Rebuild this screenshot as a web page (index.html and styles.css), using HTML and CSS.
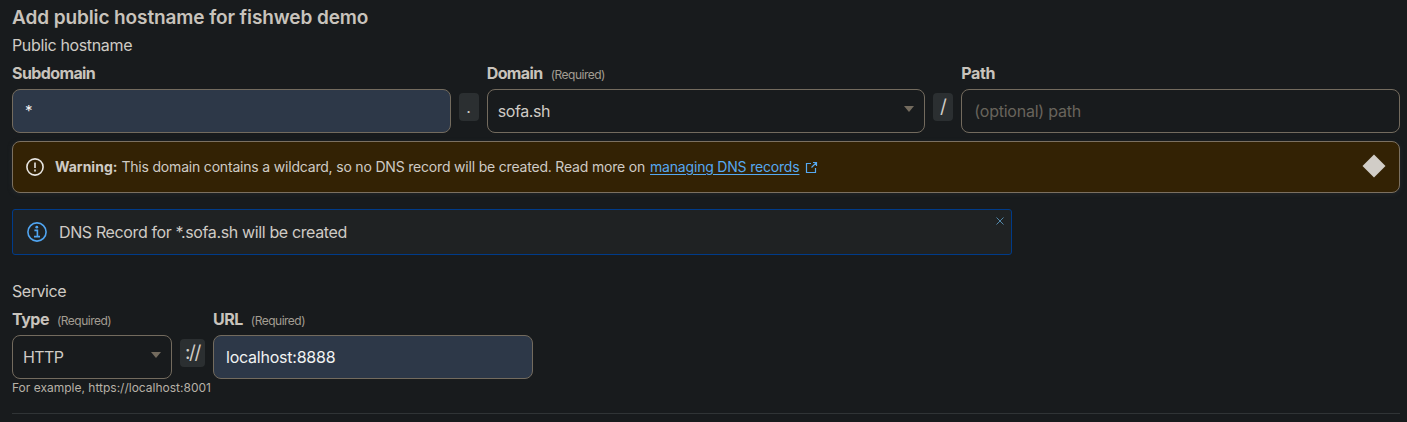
FILE: index.html
```html
<!DOCTYPE html>
<html lang="en">
<head>
<meta charset="utf-8">
<title>Add public hostname</title>
<link rel="stylesheet" href="styles.css">
</head>
<body>
<main class="page">
  <h1 class="title"><span>Add public hostname for fishweb demo</span></h1>
  <p class="section"><span>Public hostname</span></p>
  <div class="row">
    <div class="field">
      <label class="label"><b class="name subdomain">Subdomain</b></label>
      <div class="control filled"><span class="star">*</span></div>
    </div>
    <span class="sep">.</span>
    <div class="field">
      <label class="label"><b class="name domain">Domain</b><small class="required">(Required)</small></label>
      <div class="control select"><span class="sofa">sofa.sh</span><svg class="caret" viewBox="0 0 10 6"><path d="M0 0h10L5 6z"/></svg></div>
    </div>
    <span class="sep slash">/</span>
    <div class="field">
      <label class="label"><b class="name path">Path</b></label>
      <div class="control"><span class="placeholder">(optional) path</span></div>
    </div>
  </div>
  <div class="warning">
    <svg class="warn-icon" viewBox="0 0 18 18"><circle cx="9" cy="9" r="8.1"/><path d="M9 4.6v5.4M9 11.6v1.8"/></svg>
    <p class="warn-text"><b class="warn-name">Warning:</b><span class="warn-body">This domain contains a wildcard, so no DNS record will be created. Read more on</span><a class="link" href="#">managing DNS records</a></p>
    <svg class="external" viewBox="0 0 13 13"><path d="M6 2.5H1.5v9h9V7M8 1.5h3.5V5M11.5 1.5l-5 5"/></svg>
    <svg class="diamond" viewBox="0 0 24 24"><path d="M12 .5 23.5 12 12 23.5.5 12z"/></svg>
  </div>
  <div class="info">
    <svg class="info-icon" viewBox="0 0 20 20"><circle cx="10" cy="10" r="9.1"/><path d="M7.4 8.4h3v6M7 14.6h6"/><circle class="dot" cx="9.8" cy="5.2" r="1.4"/></svg>
    <span class="info-text">DNS Record for *.sofa.sh will be created</span>
    <svg class="close" viewBox="0 0 8 8"><path d="M.5.5l7 7M7.5.5l-7 7"/></svg>
  </div>
  <p class="section service"><span>Service</span></p>
  <div class="row">
    <div class="field type">
      <label class="label"><b class="name type-name">Type</b><small class="required">(Required)</small></label>
      <div class="control select"><span class="http">HTTP</span><svg class="caret" viewBox="0 0 10 6"><path d="M0 0h10L5 6z"/></svg></div>
    </div>
    <span class="sep scheme">://</span>
    <div class="field url">
      <label class="label"><b class="name url-name">URL</b><small class="required">(Required)</small></label>
      <div class="control filled"><span class="host">localhost:8888</span></div>
    </div>
  </div>
  <p class="hint"><span>For example, https://localhost:8001</span></p>
  <hr class="rule">
</main>
</body>
</html>
```
FILE: styles.css
```css
* { box-sizing: border-box; }
body { margin: 0; background: #181b1d; color: #cfcbc5; font: 16px/20px Inter, "Liberation Sans", sans-serif; overflow: hidden; }
.page { height: 422px; padding: 6px 7px 0 12px; }
.title { margin: 0; font-size: 19px; line-height: 23px; font-weight: 640; letter-spacing: -.1px; color: #c8c3bc; }
.section { margin: 6px 0 8px; letter-spacing: -.35px; }
.row { display: flex; gap: 8px; }
.field { flex: 1; min-width: 0; }
.label { display: flex; height: 20px; margin-bottom: 6px; white-space: nowrap; }
.name { font-weight: 700; letter-spacing: -.6px; color: #c8c3bc; }
.path { letter-spacing: -.4px; }
.type-name, .url-name { letter-spacing: -.5px; }
.required { margin: 2px 0 0 8px; font-size: 12px; letter-spacing: -.5px; color: #a39d92; }
.control { display: flex; align-items: center; height: 44px; padding: 0 12px; border: 1px solid #736b5e; border-radius: 8px; letter-spacing: -.23px; }
.filled { background: #2d3848; color: #f1f2f2; }
.star { font-size: 15px; }
.select { justify-content: space-between; padding: 0 10px; }
.sofa { letter-spacing: -.4px; }
.http { letter-spacing: -.6px; }
.caret { width: 10px; height: 6px; margin-top: -4px; fill: #736b5e; }
.placeholder { color: #68645c; }
.sep { width: 20px; height: 28px; margin-top: 30px; border-radius: 4px; background: #2b2f31; line-height: 28px; text-align: center; }
.slash { font-size: 19px; line-height: 28px; }
.scheme { width: 25px; font-size: 19px; line-height: 28px; letter-spacing: -1.4px; }
.warning { display: flex; align-items: center; height: 52px; margin-top: 8px; padding: 0 13px; border: 1px solid #7b7061; border-radius: 8px; background: #332204; box-shadow: 0 1px 4px #22272a; }
.warn-icon { width: 18px; height: 18px; margin-top: -1px; fill: none; stroke: #e8e6e3; stroke-width: 1.6; }
.warn-text { display: flex; margin: 0 0 0 11px; font-size: 14px; letter-spacing: -.19px; white-space: nowrap; }
.warn-name { margin-right: 4px; font-weight: 660; letter-spacing: 0; }
.link { margin-left: 5px; color: #56a9f1; text-underline-offset: 2px; }
.external { width: 13px; height: 13px; margin-left: 6px; fill: none; stroke: #56a9f1; stroke-width: 1.2; }
.diamond { width: 24px; height: 24px; margin: -2px 0 0 auto; fill: #d1cdc7; }
.info { display: flex; align-items: center; width: 1000px; height: 46px; margin-top: 16px; padding: 0 7px 0 14px; border: 1px solid #003b89; border-radius: 3px; background: #1f2223; }
.info-icon { width: 20px; height: 20px; fill: none; stroke: #50a5f1; stroke-width: 1.6; }
.info-icon .dot { fill: #50a5f1; stroke: none; }
.info-text { margin-left: 12px; letter-spacing: -.37px; }
.close { align-self: flex-start; width: 8px; height: 8px; margin: 7px 0 0 auto; stroke: #5387a8; }
.service { margin-top: 26px; letter-spacing: -.45px; }
.type { flex: none; width: 160px; }
.url { flex: none; width: 320px; }
.hint { margin: 0; font-size: 12px; line-height: 18px; color: #b7b1a7; }
.rule { margin: 16px 0 0; border: 0; border-top: 1px solid #303436; }
```
